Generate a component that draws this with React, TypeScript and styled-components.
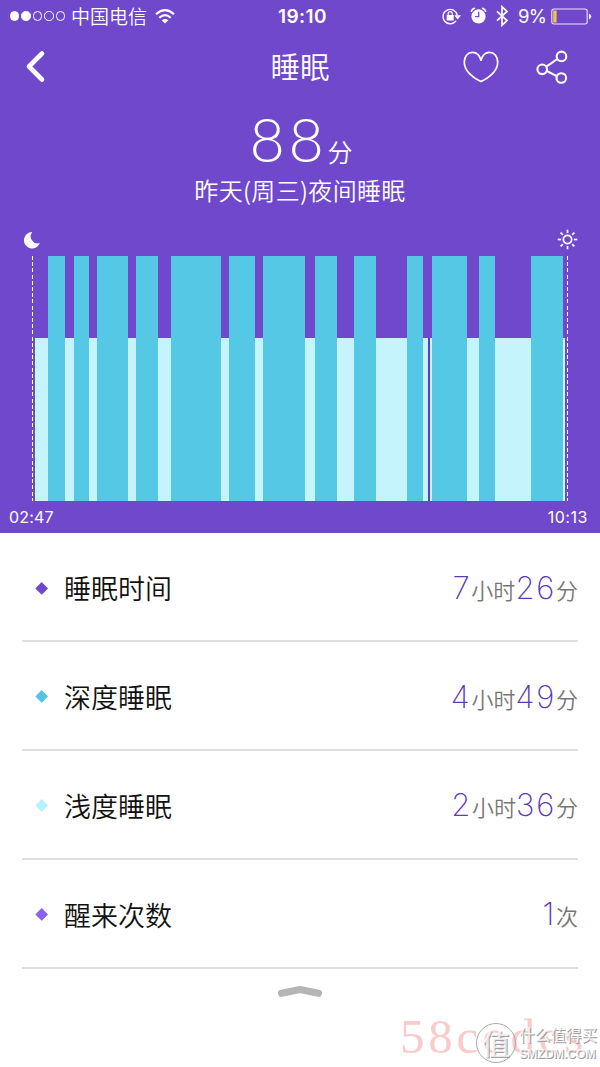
import React from 'react';
import styled, { createGlobalStyle } from 'styled-components';

const purple = '#7048cb';
const cjk = '"Noto Sans CJK SC", sans-serif';

const GlobalStyle = createGlobalStyle`
  * { box-sizing: border-box; }
  body { margin: 0; background: #fff; font-family: ${cjk}; }
`;

const Screen = styled.div`
  position: relative;
  width: 600px;
  height: 1067px;
  background: #fff;
  overflow: hidden;
`;

const Hero = styled.header`
  display: flex;
  flex-direction: column;
  height: 533px;
  background: ${purple};
  color: #fff;
`;

const StatusBar = styled.div`
  display: grid;
  grid-template-columns: 1fr auto 1fr;
  align-items: center;
  height: 32px;
  padding: 0 8px 0 10px;
`;

const StatusGroup = styled.div<{ $end?: boolean }>`
  display: flex;
  align-items: center;
  justify-content: ${p => (p.$end ? 'flex-end' : 'flex-start')};
`;

const Signal = styled.div`
  display: flex;
  gap: 2px;
  margin-right: 6px;
`;

const SignalDot = styled.i<{ $on: boolean }>`
  width: 9.4px;
  height: 9.4px;
  border: 1px solid #fff;
  border-radius: 50%;
  background: ${p => (p.$on ? '#fff' : 'transparent')};
`;

const Carrier = styled.span`
  font: 350 19px/32px ${cjk};
  margin-right: 8px;
`;

const Clock = styled.span`
  padding: 1px 0 0 3px;
  font: 600 19px/31px Inter, sans-serif;
  letter-spacing: 0.4px;
`;

const Percent = styled.span`
  padding-top: 1px;
  font: 400 18.5px/31px Inter, sans-serif;
  letter-spacing: -0.8px;
  margin: 0 5px 0 8px;
`;

const NavBar = styled.nav`
  display: grid;
  grid-template-columns: 1fr auto 1fr;
  align-items: center;
  height: 70px;
  padding: 0 32px 0 25px;
`;

const Title = styled.h1`
  margin: 0 0 4px 7px;
  font: 350 29.5px/66px ${cjk};
`;

const NavActions = styled.div`
  display: flex;
  justify-content: flex-end;
  align-items: center;
  gap: 37px;
`;

const Score = styled.div`
  display: flex;
  justify-content: center;
  align-items: baseline;
  height: 73px;
  padding-left: 2px;
  line-height: 73px;
`;

const ScoreValue = styled.span`
  font-family: Lato, sans-serif;
  font-weight: 300;
  font-size: 61px;
  letter-spacing: 3.6px;
`;

const ScoreUnit = styled.span`
  font-family: ${cjk};
  font-weight: 350;
  font-size: 25px;
`;

const Caption = styled.p`
  margin: 0;
  height: 32px;
  text-align: center;
  font: 350 24px/30px ${cjk};
  letter-spacing: 0.35px;
`;

const DayMarks = styled.div`
  display: flex;
  justify-content: space-between;
  align-items: center;
  height: 20px;
  margin-top: 23px;
  padding: 0 22px 0 23px;
`;

const Chart = styled.div`
  display: flex;
  align-items: stretch;
  height: 245.5px;
  margin: 6px 32px 0 32px;
`;

const Dashes = styled.i`
  width: 1px;
  background: repeating-linear-gradient(#fff 0 4px, transparent 4px 6.2px);
`;

const Bars = styled.div`
  flex: 1;
  display: flex;
  align-items: flex-end;
  padding: 0 2px;
`;

type Stage = 'deep' | 'light' | 'awake';

const stageLook: Record<Stage, { height: string; color: string }> = {
  deep: { height: '100%', color: '#54c8e4' },
  light: { height: '163.5px', color: '#c5f4fd' },
  awake: { height: '163.5px', color: '#5b3db4' },
};

const Bar = styled.i<{ $stage: Stage; $span: number }>`
  flex: ${p => p.$span} 0 0;
  height: ${p => stageLook[p.$stage].height};
  background: ${p => stageLook[p.$stage].color};
`;

const TimeRange = styled.div`
  display: flex;
  justify-content: space-between;
  padding: 0 12px 0 9px;
  font: 400 16px/32px Inter, sans-serif;
  letter-spacing: 0.15px;
`;

const EndTime = styled.span`
  letter-spacing: 0.55px;
`;

const List = styled.ul`
  margin: 0;
  padding: 0.4px 22px 0;
  list-style: none;
`;

const Row = styled.li`
  display: flex;
  align-items: center;
  height: 108.8px;
  padding: 3px 0 0 15px;
  border-bottom: 2px solid #dedede;
`;

const Diamond = styled.i<{ $color: string }>`
  width: 9.4px;
  height: 9.4px;
  background: ${p => p.$color};
  transform: rotate(45deg);
`;

const Label = styled.span`
  margin-left: 17.5px;
  font: 350 27px/40px ${cjk};
  color: #111;
`;

const Value = styled.span`
  display: flex;
  align-items: baseline;
  margin-left: auto;
`;

const Digits = styled.span`
  font: 250 31px/40px Inter, sans-serif;
  letter-spacing: 1.7px;
  color: #5c3ab5;
`;

const Unit = styled.span`
  font: 350 22px/40px ${cjk};
  color: #777;
`;

const Handle = styled.div`
  display: flex;
  justify-content: center;
  padding-top: 15px;
`;

const PinkMark = styled.div`
  position: absolute;
  left: 400px;
  top: 1009px;
  font: 400 49px/56px "Liberation Serif", serif;
  letter-spacing: 3.8px;
  color: #fbcaca;
`;

const SiteMark = styled.div`
  position: absolute;
  left: 476px;
  top: 1022px;
  display: flex;
  align-items: center;
  gap: 3px;
  color: rgba(255, 255, 255, 0.75);
  text-shadow: 1px 1px 0 #a0a0a0;
`;

const Seal = styled.div`
  display: grid;
  place-items: center;
  width: 40px;
  height: 40px;
  border: 1.5px solid #aaa;
  border-radius: 50%;
  font: 500 28px/36px ${cjk};
`;

const SiteText = styled.div`
  display: flex;
  flex-direction: column;
  padding-top: 2px;
  font: 500 15.6px/20px ${cjk};
`;

const SiteUrl = styled.span`
  font: 700 12.6px/20px "Liberation Sans", sans-serif;
  letter-spacing: -0.3px;
`;

const stages: [Stage, number][] = [
  ['light', 13], ['deep', 17], ['light', 9], ['deep', 15], ['light', 8], ['deep', 31],
  ['light', 8], ['deep', 22], ['light', 12.5], ['deep', 50.5], ['light', 8], ['deep', 26],
  ['light', 8], ['deep', 42], ['light', 9.5], ['deep', 22.5], ['light', 17], ['deep', 22],
  ['light', 31], ['deep', 15.5], ['light', 5.5], ['awake', 1.5], ['light', 2.5], ['deep', 34.5],
  ['light', 12.5], ['deep', 15.5], ['light', 36], ['deep', 32], ['light', 2.5],
];

const rows = [
  { label: '睡眠时间', color: '#7048cb', value: [['7', '小时'], ['26', '分']] },
  { label: '深度睡眠', color: '#54c4e4', value: [['4', '小时'], ['49', '分']] },
  { label: '浅度睡眠', color: '#b3f2ff', value: [['2', '小时'], ['36', '分']] },
  { label: '醒来次数', color: '#8a62f0', value: [['1', '次']] },
];

const WifiIcon = () => (
  <svg width="20" height="15" viewBox="0 0 20 15" fill="none" stroke="#fff" strokeWidth="2.2">
    <path d="M1 5.2Q10-2.8 19 5.2M4.3 8.7Q10 3.6 15.7 8.7" />
    <path d="M6.7 11.2Q10 8.2 13.3 11.2L10 14.6Z" fill="#fff" stroke="none" />
  </svg>
);

const StatusIcons = () => (
  <svg width="69" height="24" viewBox="0 0 69 24" fill="none" stroke="#fff" strokeLinecap="round">
    <path d="M14.7 17.2A7.2 7.2 0 1 1 16.2 11" strokeWidth="1.4" />
    <path d="M13.2 11.2H20L16.7 15.4Z" fill="#fff" stroke="none" />
    <rect x="5.7" y="11" width="7" height="5.5" rx=".6" fill="#fff" stroke="none" />
    <path d="M7.2 11V9.6a2 2 0 0 1 4 0V11" strokeWidth="1.2" />
    <circle cx="37.5" cy="12.4" r="7.1" fill="#fff" stroke="none" />
    <path d="M30.4 7.3Q31 4.9 33.3 4.4M44.6 7.3Q44 4.9 41.7 4.4" strokeWidth="1.6" />
    <path d="M37.7 8.2V12.7H34.6" stroke={purple} strokeWidth="1.3" />
    <path d="M56 7.4L66 16.6L61 21.2V2.8L66 7.4L56 16.6" strokeWidth="1.7" strokeLinecap="butt" />
  </svg>
);

const BatteryIcon = () => (
  <svg width="41" height="17" viewBox="0 0 41 17">
    <rect x=".8" y="1" width="35.4" height="15" rx="2.2" fill="none" stroke="#eee4fb" strokeWidth="1.1" />
    <rect x="2.2" y="2.5" width="3.4" height="12" fill="#f5c04d" />
    <path d="M38 5.8Q40.2 6.2 40.2 8.5T38 11.2Z" fill="#fff" />
  </svg>
);

const BackIcon = () => (
  <svg width="22" height="34" viewBox="0 0 22 34" fill="none" stroke="#fff" strokeWidth="4.6" strokeLinecap="round" strokeLinejoin="round">
    <path d="M17 3.5L4 16.5L17 29.5" />
  </svg>
);

const HeartIcon = () => (
  <svg width="36" height="32" viewBox="0 0 36 32" fill="none" stroke="#fff" strokeWidth="1.7" strokeLinejoin="round">
    <path d="M18 30.6C12 27.6 1.3 21 1.3 11C1.3 5.2 5 1.3 9.4 1.3C13.6 1.3 16.8 4.6 18 9.2C19.2 4.6 22.4 1.3 26.6 1.3C31 1.3 34.7 5.2 34.7 11C34.7 21 24 27.6 18 30.6Z" />
  </svg>
);

const ShareIcon = () => (
  <svg width="32" height="34" viewBox="0 0 32 34" fill="none" stroke="#fff" strokeWidth="2.1">
    <circle cx="6.2" cy="19.3" r="4.8" />
    <circle cx="25.5" cy="6.4" r="4.8" />
    <circle cx="25.3" cy="28" r="4.8" />
    <path d="M10.3 16.7L21.4 9M10.7 21L20.8 26.1" />
  </svg>
);

const MoonIcon = () => (
  <svg width="18" height="18" viewBox="0 0 18 18">
    <path d="M9.3 1A8.2 8.2 0 1 0 16.8 12.1A7 7 0 0 1 9.3 1Z" fill="#fff" />
  </svg>
);

const SunIcon = () => (
  <svg width="21" height="21" viewBox="-10.5 -10.5 21 21" fill="none" stroke="#fff" strokeWidth="1.7">
    <circle r="4.2" />
    {[0, 45, 90, 135, 180, 225, 270, 315].map(a => (
      <path key={a} d="M6.4 0H9.8" transform={`rotate(${a})`} />
    ))}
  </svg>
);

export default function App() {
  return (
    <Screen>
      <GlobalStyle />
      <Hero>
        <StatusBar>
          <StatusGroup>
            <Signal>
              {[true, true, false, false, false].map((on, i) => <SignalDot key={i} $on={on} />)}
            </Signal>
            <Carrier>中国电信</Carrier>
            <WifiIcon />
          </StatusGroup>
          <Clock>19:10</Clock>
          <StatusGroup $end>
            <StatusIcons />
            <Percent>9%</Percent>
            <BatteryIcon />
          </StatusGroup>
        </StatusBar>
        <NavBar>
          <BackIcon />
          <Title>睡眠</Title>
          <NavActions>
            <HeartIcon />
            <ShareIcon />
          </NavActions>
        </NavBar>
        <Score>
          <ScoreValue>88</ScoreValue>
          <ScoreUnit>分</ScoreUnit>
        </Score>
        <Caption>昨天(周三)夜间睡眠</Caption>
        <DayMarks>
          <MoonIcon />
          <SunIcon />
        </DayMarks>
        <Chart>
          <Dashes />
          <Bars>
            {stages.map(([stage, span], i) => <Bar key={i} $stage={stage} $span={span} />)}
          </Bars>
          <Dashes />
        </Chart>
        <TimeRange>
          <span>02:47</span>
          <EndTime>10:13</EndTime>
        </TimeRange>
      </Hero>
      <List>
        {rows.map(row => (
          <Row key={row.label}>
            <Diamond $color={row.color} />
            <Label>{row.label}</Label>
            <Value>
              {row.value.map(([n, unit]) => (
                <React.Fragment key={unit}>
                  <Digits>{n}</Digits>
                  <Unit>{unit}</Unit>
                </React.Fragment>
              ))}
            </Value>
          </Row>
        ))}
      </List>
      <Handle>
        <svg width="46" height="16" viewBox="0 0 46 16" fill="none" stroke="#b5b5b5" strokeWidth="7" strokeLinecap="round" strokeLinejoin="round">
          <path d="M4.5 9.2L23 5.5L41.5 9.2" />
        </svg>
      </Handle>
      <PinkMark>58codes</PinkMark>
      <SiteMark>
        <Seal>值</Seal>
        <SiteText>
          什么值得买
          <SiteUrl>SMZDM.COM</SiteUrl>
        </SiteText>
      </SiteMark>
    </Screen>
  );
}
